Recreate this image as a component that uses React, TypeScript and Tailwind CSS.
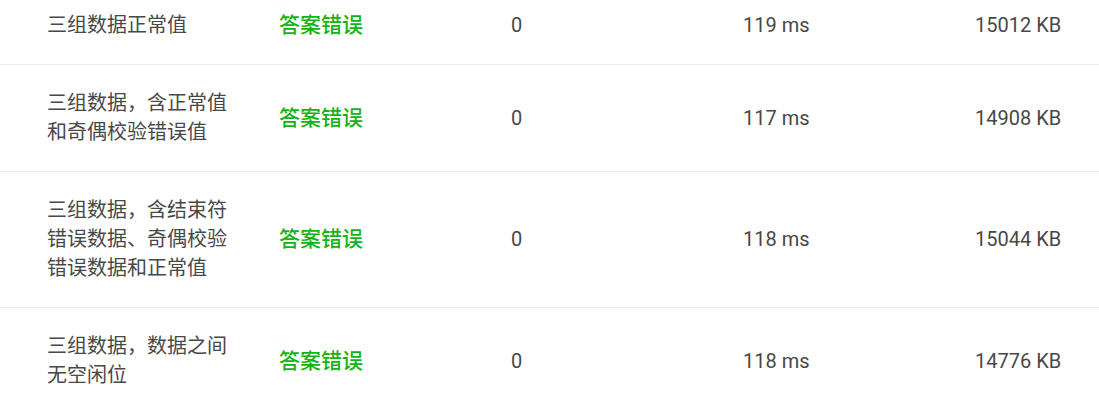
const rows = [
  { name: "三组数据正常值", status: "答案错误", score: "0", time: "119 ms", mem: "15012 KB" },
  { name: "三组数据，含正常值和奇偶校验错误值", status: "答案错误", score: "0", time: "117 ms", mem: "14908 KB" },
  {
    name: "三组数据，含结束符错误数据、奇偶校验错误数据和正常值",
    status: "答案错误",
    score: "0",
    time: "118 ms",
    mem: "15044 KB",
  },
  { name: "三组数据，数据之间无空闲位", status: "答案错误", score: "0", time: "118 ms", mem: "14776 KB" },
];

export default function App() {
  return (
    <div className="w-full h-[406px] overflow-hidden bg-white font-['Roboto','Noto_Sans_CJK_SC',sans-serif] text-[20px] leading-[29px] text-[#484848]">
      <div className="-mt-[13px]">
        {rows.map((r, i) => (
          <div
            key={i}
            className="grid grid-cols-[232px_232px_232px_232px_1fr] items-center border-b border-[#ebebeb] py-6"
          >
            <div className="pl-[47px]">{r.name}</div>
            <div className="pl-[47px] text-[21px] font-medium text-[#14b414]">{r.status}</div>
            <div className="pl-[47px]">{r.score}</div>
            <div className="pl-[47px]">{r.time}</div>
            <div className="pl-[47px] whitespace-nowrap">{r.mem}</div>
          </div>
        ))}
      </div>
    </div>
  );
}
